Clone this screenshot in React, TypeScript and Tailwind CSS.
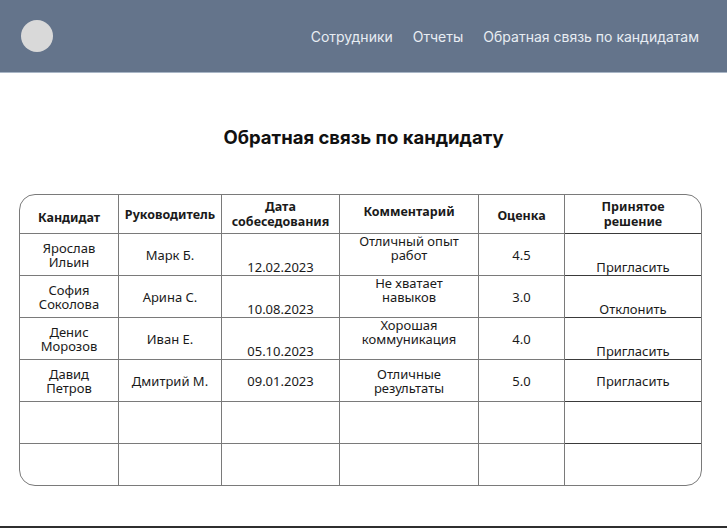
import React from 'react';

type Align = 'top' | 'center' | 'bottom';

interface Row {
    candidate: string[];
    manager: string;
    date: string;
    comment: string[];
    score: string;
    decision: string;
    dateAlign: Align;
    commentAlign: Align;
    decisionAlign: Align;
}

const rows: Row[] = [
    { candidate: ['Ярослав', 'Ильин'], manager: 'Марк Б.', date: '12.02.2023', comment: ['Отличный опыт', 'работ'], score: '4.5', decision: 'Пригласить', dateAlign: 'bottom', commentAlign: 'top', decisionAlign: 'bottom' },
    { candidate: ['София', 'Соколова'], manager: 'Арина С.', date: '10.08.2023', comment: ['Не хватает', 'навыков'], score: '3.0', decision: 'Отклонить', dateAlign: 'bottom', commentAlign: 'top', decisionAlign: 'bottom' },
    { candidate: ['Денис', 'Морозов'], manager: 'Иван Е.', date: '05.10.2023', comment: ['Хорошая', 'коммуникация'], score: '4.0', decision: 'Пригласить', dateAlign: 'bottom', commentAlign: 'top', decisionAlign: 'bottom' },
    { candidate: ['Давид', 'Петров'], manager: 'Дмитрий М.', date: '09.01.2023', comment: ['Отличные', 'результаты'], score: '5.0', decision: 'Пригласить', dateAlign: 'center', commentAlign: 'center', decisionAlign: 'center' },
];

const alignClass: Record<Align, string> = {
    top: 'justify-start',
    center: 'justify-center',
    bottom: 'justify-end pb-[1px]',
};

const Cell: React.FC<{ children?: React.ReactNode; align?: Align; last?: boolean; bottom?: boolean }> = ({ children, align = 'center', last, bottom }) => (
    <div className={`flex flex-col items-center text-center leading-[14px] ${alignClass[align]} ${last ? '' : 'border-r border-[#7a7a7a]'} ${bottom ? '' : 'border-b border-[#3a3a3a]'}`}>
        {children}
    </div>
);

const HeadCell: React.FC<{ lines: string[]; last?: boolean; offset?: string }> = ({ lines, last, offset = '' }) => (
    <div className={`flex flex-col items-center justify-center text-center font-bold text-[12.5px] leading-[15px] border-b border-[#3a3a3a] ${offset} ${last ? '' : 'border-r border-[#7a7a7a]'}`}>
        {lines.map(l => <span key={l}>{l}</span>)}
    </div>
);

export default function App() {
    return (
        <div className="w-[727px] h-[528px] overflow-hidden bg-white">
            <header className="h-[73px] bg-[#64748b] border-b border-[#a9b6c6] flex items-center justify-between pl-[21px] pr-[28px]">
                <div className="w-[32px] h-[32px] rounded-full bg-[#d9d9d9]" />
                <nav className="flex gap-[20px] text-[14px] text-[#e8edf3] font-['Inter',sans-serif]">
                    <span>Сотрудники</span>
                    <span>Отчеты</span>
                    <span>Обратная связь по кандидатам</span>
                </nav>
            </header>

            <h1 className="mt-[50px] text-center font-['Inter',sans-serif] font-bold text-[18.5px] leading-7 text-[#111]">
                Обратная связь по кандидату
            </h1>

            <div className="mt-[43px] ml-[19px] w-[683px] rounded-[16px] border border-[#7a7a7a] overflow-hidden font-['Noto_Sans',sans-serif] text-[13px] text-[#1a1a1a]">
                <div className="grid grid-cols-[99px_103px_118px_139px_86px_136px] grid-rows-[39px_42px_42px_42px_42px_42px_41px]">
                    <HeadCell lines={['Кандидат']} offset="pt-[7px]" />
                    <HeadCell lines={['Руководитель']} />
                    <HeadCell lines={['Дата', 'собеседования']} />
                    <HeadCell lines={['Комментарий']} offset="pb-[6px]" />
                    <HeadCell lines={['Оценка']} offset="pt-[3px]" />
                    <HeadCell lines={['Принятое', 'решение']} last />

                    {rows.map(r => (
                        <React.Fragment key={r.date}>
                            <Cell>{r.candidate.map(l => <span key={l}>{l}</span>)}</Cell>
                            <Cell>{r.manager}</Cell>
                            <Cell align={r.dateAlign}>{r.date}</Cell>
                            <Cell align={r.commentAlign}>{r.comment.map(l => <span key={l}>{l}</span>)}</Cell>
                            <Cell>{r.score}</Cell>
                            <Cell align={r.decisionAlign} last>{r.decision}</Cell>
                        </React.Fragment>
                    ))}

                    {[0, 1].map(i => (
                        <React.Fragment key={i}>
                            {[0, 1, 2, 3, 4, 5].map(c => <Cell key={c} last={c === 5} bottom={i === 1} />)}
                        </React.Fragment>
                    ))}
                </div>
            </div>

            <div className="mt-[40px] border-t-2 border-[#2f2f2f]" />
        </div>
    );
}
